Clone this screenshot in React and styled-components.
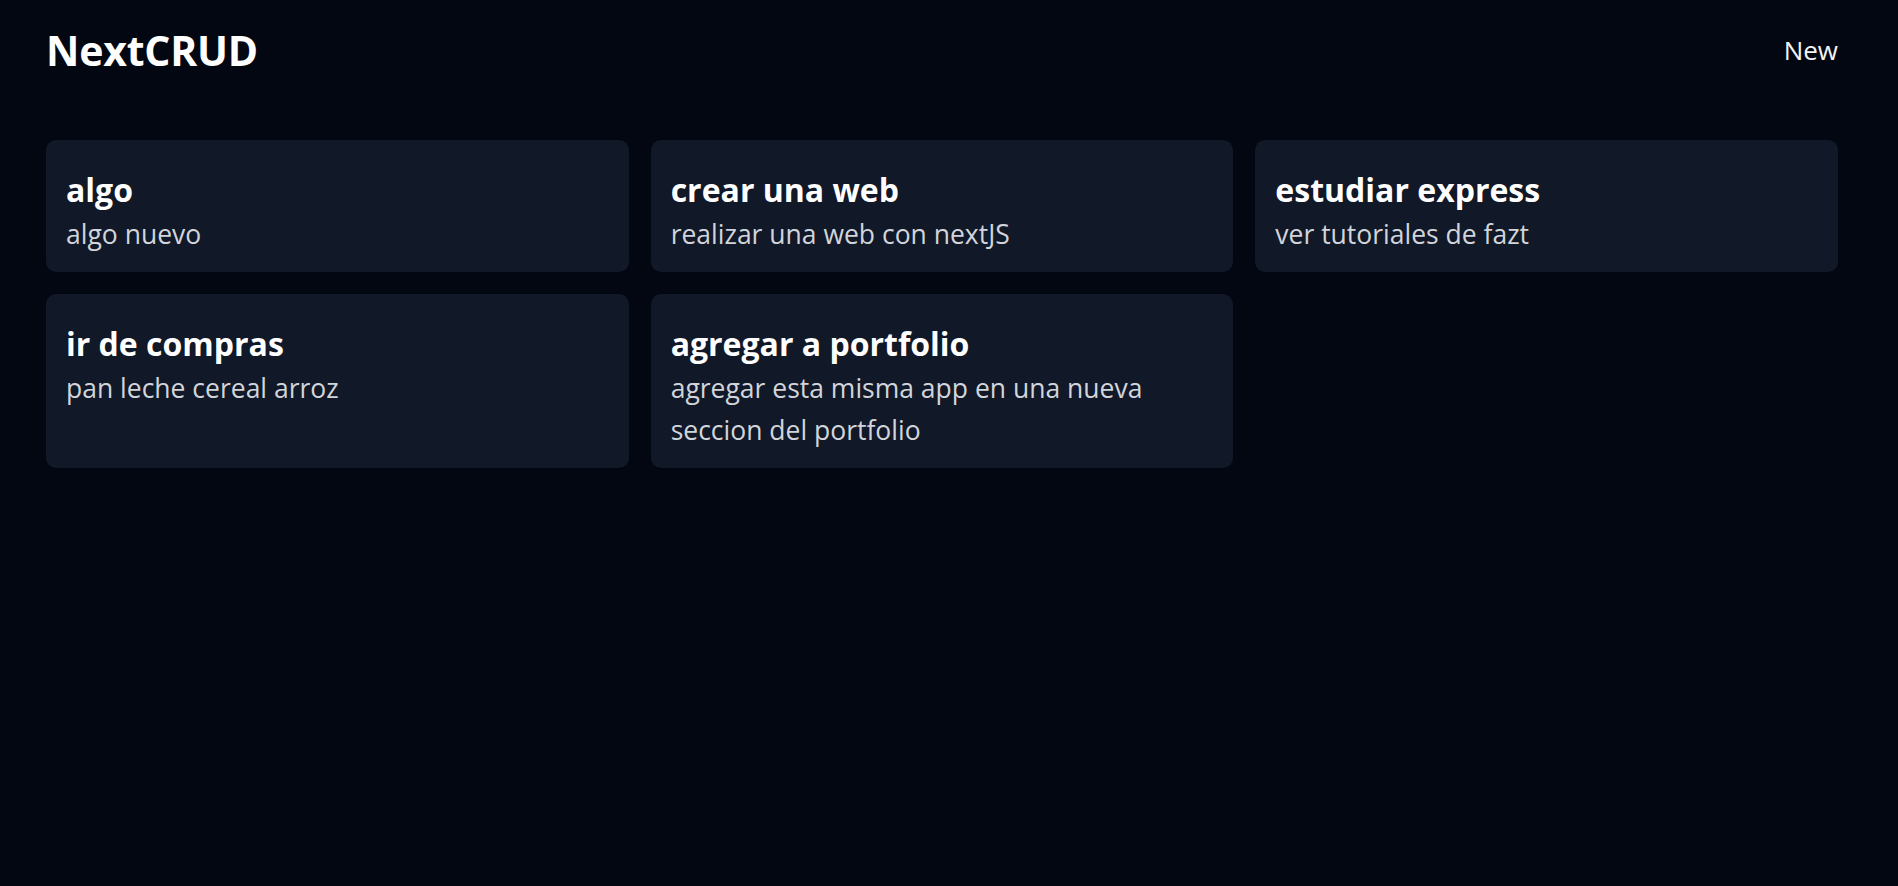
import styled, { createGlobalStyle } from 'styled-components'

const GlobalStyle = createGlobalStyle`
  * {
    box-sizing: border-box;
  }

  body {
    margin: 0;
    background: #030712;
    color: #ffffff;
    font-family: "Open Sans", "Noto Sans", sans-serif;
  }
`

const Page = styled.div`
  min-height: 886px;
  padding: 0 60px 0 46px;
`

const Navbar = styled.header`
  display: flex;
  justify-content: space-between;
  align-items: center;
  padding-top: 22px;
`

const Brand = styled.h1`
  margin: 0;
  font-size: 41px;
  line-height: 56px;
  font-weight: 700;
  letter-spacing: -0.2px;
`

const NavLink = styled.a`
  font-size: 26px;
  line-height: 32px;
  color: #f3f4f6;
  text-decoration: none;
  cursor: pointer;
`

const TaskGrid = styled.section`
  display: grid;
  grid-template-columns: repeat(3, 1fr);
  gap: 22px;
  margin-top: 62px;
`

const TaskCard = styled.article`
  background: #111827;
  border-radius: 10px;
  padding: 26px 20px 17px;
  cursor: pointer;
`

const TaskTitle = styled.h2`
  margin: 0;
  font-size: 32px;
  line-height: 47px;
  font-weight: 700;
  color: #ffffff;
`

const TaskText = styled.p`
  margin: 0;
  font-size: 26.5px;
  line-height: 42px;
  color: #d1d5db;
`

const tasks = [
  { id: 1, title: 'algo', description: 'algo nuevo' },
  { id: 2, title: 'crear una web', description: 'realizar una web con nextJS' },
  { id: 3, title: 'estudiar express', description: 'ver tutoriales de fazt' },
  { id: 4, title: 'ir de compras', description: 'pan leche cereal arroz' },
  {
    id: 5,
    title: 'agregar a portfolio',
    description: 'agregar esta misma app en una nueva seccion del portfolio',
  },
]

function App() {
  return (
    <>
      <GlobalStyle />
      <Page>
        <Navbar>
          <Brand>NextCRUD</Brand>
          <NavLink>New</NavLink>
        </Navbar>
        <TaskGrid>
          {tasks.map((task) => (
            <TaskCard key={task.id}>
              <TaskTitle>{task.title}</TaskTitle>
              <TaskText>{task.description}</TaskText>
            </TaskCard>
          ))}
        </TaskGrid>
      </Page>
    </>
  )
}

export default App
